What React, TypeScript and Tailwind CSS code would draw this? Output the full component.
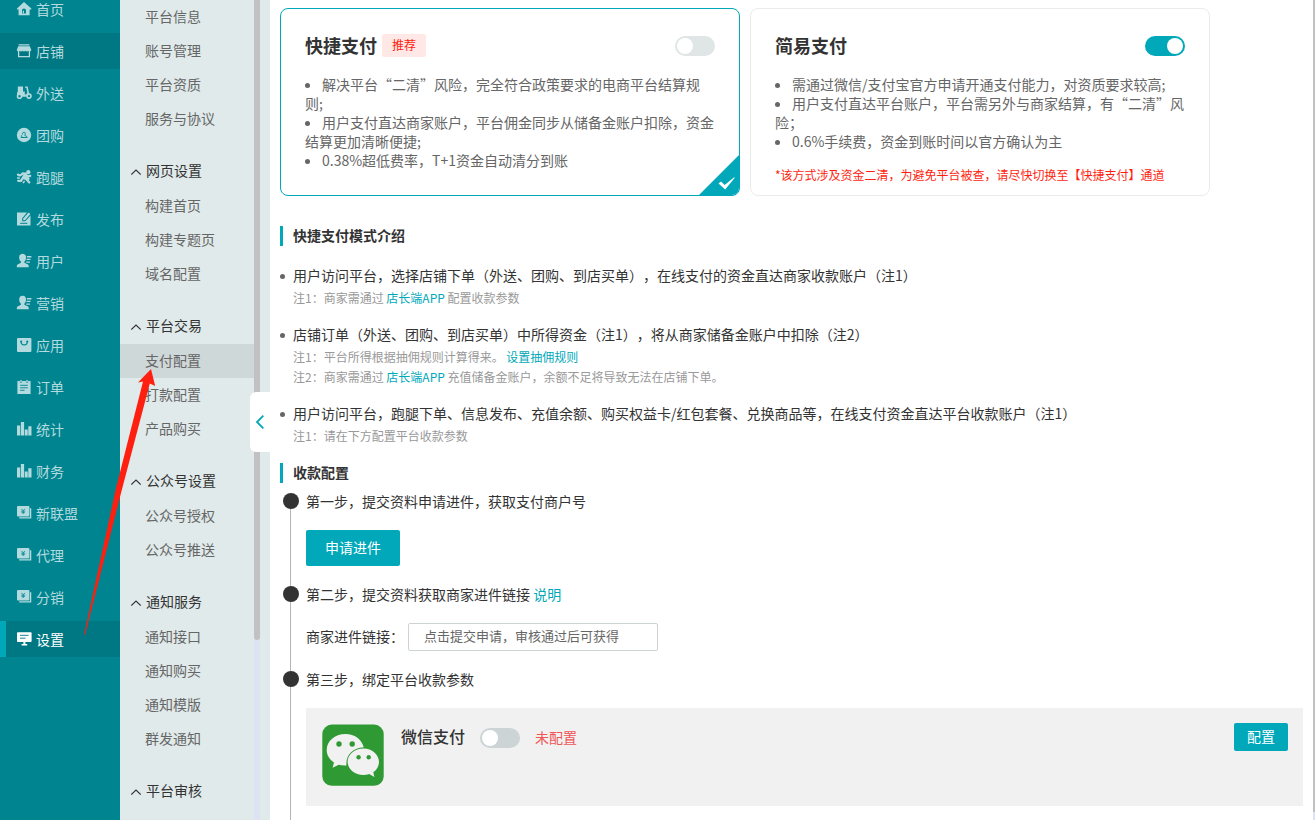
import React from "react";

const ICONS: Record<string, React.ReactNode> = {
  home: (
    <>
      <path d="M7 0 14.300 6.400V7.600H12.600V13.300H1.600V7.600H0V6.400Z" fill="currentColor" />
      <path d="M7 6.600c1.200 0 2 .9 2 2V11.400H5V8.600c0-1.100.8-2 2-2Z" className="fill-[#008590]" />
      <path d="M7 8.200v3.200H5.800V9.400Z" fill="currentColor" />
    </>
  ),
  shop: (
    <>
      <path d="M1.600 .3H12.400V1.500H1.600ZM1.200 2.200H12.800L14.300 6C14.300 7.400 12.300 7.800 11.600 6.700 11 7.800 9.200 7.800 8.500 6.700 7.800 7.800 6.200 7.800 5.500 6.700 4.800 7.800 3 7.800 2.400 6.700 1.800 7.800 -.2 7.400 -.2 6Z" fill="currentColor" />
      <path d="M1.600 7V12.600H12.400V7" fill="none" stroke="currentColor" strokeWidth="1.300" />
    </>
  ),
  scooter: (
    <>
      <path d="M.8 .4H6V5.600H7.800V8.500H9.400L10.300 6.500 9.400 1.800H8V.5H10.700L12 7.200 8.700 10.800H0V8C0 6.800.3 6.100.8 5.700Z" fill="currentColor" />
      <circle cx="2.500" cy="10.300" r="2" className="fill-[#008590]" stroke="currentColor" strokeWidth="1.600" />
      <circle cx="12" cy="10.100" r="2" className="fill-[#008590]" stroke="currentColor" strokeWidth="1.600" />
    </>
  ),
  group: (
    <>
      <circle cx="7" cy="7" r="7.200" fill="currentColor" />
      <path d="M5.500 6.500C4.800 4 8.500 3.400 8.300 5.600L7.800 7.500M3.800 9.500H10.400M4.800 7.200C3.500 8 4 9.200 5.800 9.200M8 7.500 9.800 8.600V9.500" fill="none" className="stroke-[#008590]" strokeWidth=".9" />
    </>
  ),
  runner: (
    <>
      <circle cx="11.300" cy="2.200" r="2.100" fill="currentColor" />
      <path d="M1 4.600C2.300 6 4.300 5.200 5.600 3.400L8.600 3.600 10 6.600 13.200 5.800M8 4.400 6 7.600 9.500 9.200 12.300 12.400M6 7.600 4 10.800H1.200M8.600 7.400 11.500 8.800" fill="none" stroke="currentColor" strokeWidth="2.300" strokeLinejoin="round" strokeLinecap="round" />
      <path d="M0 8H2.800M7.600 11 6 13.200" fill="none" stroke="currentColor" strokeWidth="1.400" />
    </>
  ),
  edit: (
    <>
      <path d="M0 .5H10L5.200 6.200V9.200H8.300L13.500 3.600V13.500H0Z" fill="currentColor" />
      <path d="M6.200 8.300V6.500L11.600.4 13.400 2 8 8.300Z" fill="currentColor" />
      <path d="M3.200 11.300H10.400" className="stroke-[#008590]" strokeWidth="1" />
    </>
  ),
  user: (
    <>
      <path d="M5.600 -.3C8.200 -.3 9.200 1.700 9 3.900 8.900 5.600 8.200 6.700 7.400 7.500V8.800L11 10.500C11.700 10.900 11.800 12 11.800 13.300H-.2C-.2 12 -.1 10.900.6 10.500L3.900 8.800V7.500C3 6.700 2.300 5.600 2.200 3.900 2 1.700 3 -.3 5.600 -.3Z" fill="currentColor" />
      <path d="M9.900 2H14.400V3.400H9.900ZM9.700 4.700H13.500V6.100H9.400ZM9.200 7.400H12.900V8.800H9.200Z" fill="currentColor" />
    </>
  ),
  app: (
    <>
      <rect x="0" y="0" width="14.400" height="14" rx="1" fill="currentColor" />
      <path d="M4.100 3.400C4.100 8 10.300 8 10.300 3.400" fill="none" className="stroke-[#008590]" strokeWidth="1.200" />
      <circle cx="4.100" cy="3.500" r="1" className="fill-[#008590]" />
      <circle cx="10.300" cy="3.500" r="1" className="fill-[#008590]" />
    </>
  ),
  order: (
    <>
      <path d="M.4 1H13.600V14H.4Z" fill="currentColor" />
      <path d="M4 0V2.800M10 0V2.800" className="stroke-[#008590]" strokeWidth="2.200" />
      <path d="M4 0V2.400M10 0V2.400" stroke="currentColor" strokeWidth="1.400" />
      <path d="M3.200 5.300H10.800M3.200 7.800H10.800M3.200 10.300H7.500" className="stroke-[#008590]" strokeWidth=".9" />
    </>
  ),
  bars: <path d="M0 3.500H3.200V13.400H0ZM3.900 0H7.100V13.400H3.900ZM7.800 7.400H10.700V13.400H7.800ZM11.300 4.200H14.500V13.400H11.300Z" fill="currentColor" />,
  money: (
    <>
      <rect x="0" y="0" width="12.400" height="10.600" rx="1" fill="currentColor" />
      <path d="M13.600 2.200V11.800H2.200" fill="none" stroke="currentColor" strokeWidth="1.300" />
      <path d="M4.500 2.900 6.200 4.800 7.900 2.900M4.200 5.200H8.200M4.600 6.600H7.800M6.200 4.800V8" fill="none" className="stroke-[#008590]" strokeWidth=".8" />
    </>
  ),
  screen: (
    <>
      <path d="M.8 .2H13.800Q14.600.200 14.600 1V9.300Q14.600 10.100 13.800 10.100H8.400V12H10.200V13.500H4.600V12H6.400V10.100H.8Q0 10.100 0 9.300V1Q0 .2.8.2Z" fill="currentColor" />
      <path d="M3 3.300H11.600M3 6.200H8.500" className="stroke-[#007883]" strokeWidth=".9" />
    </>
  ),
};

const NAV: { label: string; icon: string; state?: "hover" | "active" }[] = [
  { label: "首页", icon: "home" },
  { label: "店铺", icon: "shop", state: "hover" },
  { label: "外送", icon: "scooter" },
  { label: "团购", icon: "group" },
  { label: "跑腿", icon: "runner" },
  { label: "发布", icon: "edit" },
  { label: "用户", icon: "user" },
  { label: "营销", icon: "user" },
  { label: "应用", icon: "app" },
  { label: "订单", icon: "order" },
  { label: "统计", icon: "bars" },
  { label: "财务", icon: "bars" },
  { label: "新联盟", icon: "money" },
  { label: "代理", icon: "money" },
  { label: "分销", icon: "money" },
  { label: "设置", icon: "screen", state: "active" },
];

const MENU: { title?: string; items: string[] }[] = [
  { items: ["平台信息", "账号管理", "平台资质", "服务与协议"] },
  { title: "网页设置", items: ["构建首页", "构建专题页", "域名配置"] },
  { title: "平台交易", items: ["支付配置", "打款配置", "产品购买"] },
  { title: "公众号设置", items: ["公众号授权", "公众号推送"] },
  { title: "通知服务", items: ["通知接口", "通知购买", "通知模版", "群发通知"] },
  { title: "平台审核", items: [] },
];

function MainNav() {
  return (
    <nav className="w-[120px] shrink-0 overflow-hidden bg-[#008590]">
      <ul className="-mt-[9px] flex flex-col gap-[6px]">
        {NAV.map((n) => {
          const tone =
            n.state === "active"
              ? "border-[#00a8b9] bg-[#007883] text-white"
              : n.state === "hover"
                ? "border-transparent bg-[#007883] text-[#b3dade]"
                : "border-transparent text-[#b3dade]";
          return (
            <li key={n.label}>
              <a href="#" className={`flex h-9 items-center gap-[5px] border-l-[6px] pl-[11px] text-sm ${tone}`}>
                <svg viewBox="0 0 14 14" className="mb-px size-[14px] shrink-0 overflow-visible" aria-hidden="true">
                  {ICONS[n.icon]}
                </svg>
                {n.label}
              </a>
            </li>
          );
        })}
      </ul>
    </nav>
  );
}

function SubNav() {
  return (
    <aside className="relative flex w-[150px] shrink-0 bg-[#e0eaea] pr-[10px]">
      <nav className="min-w-0 flex-1 overflow-hidden text-sm">
        {MENU.map((g, i) => (
          <section key={i}>
            {g.title && (
              <h3 className="mt-[18px] flex h-[35px] items-center gap-[5px] pb-[3px] pl-[11px] text-[#333]">
                <svg viewBox="0 0 10 6" className="mt-1 h-[6px] w-[10px]" aria-hidden="true">
                  <path d="M.3 5.500 5 1l4.700 4.500" fill="none" stroke="currentColor" strokeWidth="1.100" />
                </svg>
                {g.title}
              </h3>
            )}
            <ul>
              {g.items.map((t) => (
                <li key={t}>
                  <a
                    href="#"
                    className={`flex h-[34px] items-center pb-[2px] pl-[25px] text-[#666] ${t === "支付配置" ? "bg-[#cfd8d9]" : ""}`}
                  >
                    {t}
                  </a>
                </li>
              ))}
            </ul>
          </section>
        ))}
      </nav>
      <div className="flex w-[6px] flex-col bg-[#dde3f3]">
        <div className="h-[78%] rounded-b-[3px] bg-[#c1c1c1]" />
      </div>
      <button
        type="button"
        aria-label="收起菜单"
        className="absolute top-[392px] right-0 flex h-[60px] w-5 items-center justify-center rounded-l-md bg-white text-[#00a8b9]"
      >
        <svg viewBox="0 0 8 14" className="h-[14px] w-2" aria-hidden="true">
          <path d="M7.300.7 1 7l6.300 6.300" fill="none" stroke="currentColor" strokeWidth="1.800" />
        </svg>
      </button>
    </aside>
  );
}

function Toggle({ label, on, off = "bg-[#ccd4d5]" }: { label: string; on?: boolean; off?: string }) {
  return (
    <input
      type="checkbox"
      role="switch"
      aria-label={label}
      defaultChecked={on}
      className={`h-5 w-10 shrink-0 appearance-none rounded-full p-[2px] before:block before:size-4 before:rounded-full before:bg-white checked:bg-[#00a8b9] checked:before:ml-5 ${off}`}
    />
  );
}

function Bullet({ children }: { children: React.ReactNode }) {
  return (
    <li>
      <span className="mr-3 inline-block size-[5px] rounded-full bg-[#666] align-[2px]" />
      {children}
    </li>
  );
}

function SectionTitle({ children }: { children: React.ReactNode }) {
  return (
    <h2 className="border-l-[3px] border-[#00a8b9] pb-[2px] pl-[10px] text-sm leading-[18px] font-semibold text-[#333]">
      {children}
    </h2>
  );
}

function Intro({ title, notes }: { title: string; notes: React.ReactNode[] }) {
  return (
    <li className="flex gap-2">
      <span className="mt-2 size-[5px] shrink-0 rounded-full bg-[#666]" />
      <div>
        <p className="mb-1 text-sm leading-[18px] text-[#333]">{title}</p>
        {notes.map((n, i) => (
          <p key={i} className="text-xs leading-5 text-[#999]">
            {n}
          </p>
        ))}
      </div>
    </li>
  );
}

function Step({ title, last, children }: { title: React.ReactNode; last?: boolean; children: React.ReactNode }) {
  return (
    <li className={`flex gap-[7px] ${last ? "flex-1" : ""}`}>
      <div className="flex w-4 shrink-0 flex-col">
        <span className="size-4 rounded-full bg-[#333]" />
        <span className="ml-[7px] w-px flex-1 bg-[#b5b5b5]" />
      </div>
      <div className="min-w-0 flex-1 pb-5">
        <h3 className="mb-[21px] text-sm leading-4 text-[#333]">{title}</h3>
        {children}
      </div>
    </li>
  );
}

function TealLink({ children }: { children: React.ReactNode }) {
  return (
    <a href="#" className="text-[#00a8b9]">
      {children}
    </a>
  );
}

export default function App() {
  return (
    <div
      lang="zh-CN"
      className="relative flex h-screen overflow-hidden bg-white font-['Noto_Sans_CJK_SC',sans-serif] [text-spacing-trim:space-all]"
    >
      <MainNav />
      <SubNav />

      <main className="flex min-w-0 flex-1 flex-col overflow-hidden px-[10px] pt-2">
        <div className="flex gap-[10px]">
          <section className="relative min-h-[188px] max-w-[460px] flex-1 overflow-hidden rounded-lg border border-[#00a8b9] px-6 pt-[25px] pb-[9px]">
            <div className="flex h-6 items-center">
              <h2 className="pb-[2px] text-lg leading-[22px] font-bold text-[#333]">快捷支付</h2>
              <span className="mb-px ml-[5px] rounded-xs bg-[#ffe8e6] px-[10px] pb-px text-xs leading-[22px] text-[#ff1e10]">
                推荐
              </span>
              <div className="ml-auto flex">
                <Toggle label="快捷支付" off="bg-[#e0e5e6]" />
              </div>
            </div>
            <ul className="mt-[17px] text-sm leading-[19px] text-[#666]">
              <Bullet>解决平台“二清”风险，完全符合政策要求的电商平台结算规则;</Bullet>
              <Bullet>用户支付直达商家账户，平台佣金同步从储备金账户扣除，资金结算更加清晰便捷;</Bullet>
              <Bullet>0.38%超低费率，T+1资金自动清分到账</Bullet>
            </ul>
            <svg viewBox="0 0 40 40" className="absolute right-0 bottom-0 size-10" aria-hidden="true">
              <path d="M40 0V40H0Z" fill="#00a8b9" />
              <path d="M19.500 28.500 22 26.600 25.600 30 35.200 22.200 35.800 22.800 26.200 34.500Z" fill="#fff" />
            </svg>
          </section>

          <section className="min-h-[188px] max-w-[460px] flex-1 rounded-lg border border-[#ebebeb] px-6 pt-[25px] pb-[9px]">
            <div className="flex h-6 items-center justify-between">
              <h2 className="pb-[2px] text-lg leading-[22px] font-bold text-[#333]">简易支付</h2>
              <Toggle label="简易支付" on />
            </div>
            <ul className="mt-[17px] text-sm leading-[19px] text-[#666]">
              <Bullet>需通过微信/支付宝官方申请开通支付能力，对资质要求较高;</Bullet>
              <Bullet>用户支付直达平台账户，平台需另外与商家结算，有“二清”风险；</Bullet>
              <Bullet>0.6%手续费，资金到账时间以官方确认为主</Bullet>
            </ul>
            <p className="mt-[15px] text-xs leading-[18px] text-[#ff1e10]">
              *该方式涉及资金二清，为避免平台被查，请尽快切换至【快捷支付】通道
            </p>
          </section>
        </div>

        <div className="mt-[30px]">
          <SectionTitle>快捷支付模式介绍</SectionTitle>
        </div>
        <ul className="mt-5 mb-[17px] flex flex-col gap-[17px]">
          <Intro
            title="用户访问平台，选择店铺下单（外送、团购、到店买单），在线支付的资金直达商家收款账户（注1）"
            notes={[<>注1：商家需通过 <TealLink>店长端APP</TealLink> 配置收款参数</>]}
          />
          <Intro
            title="店铺订单（外送、团购、到店买单）中所得资金（注1），将从商家储备金账户中扣除（注2）"
            notes={[
              <>注1：平台所得根据抽佣规则计算得来。 <TealLink>设置抽佣规则</TealLink></>,
              <>注2：商家需通过 <TealLink>店长端APP</TealLink> 充值储备金账户，余额不足将导致无法在店铺下单。</>,
            ]}
          />
          <Intro
            title="用户访问平台，跑腿下单、信息发布、充值余额、购买权益卡/红包套餐、兑换商品等，在线支付资金直达平台收款账户（注1）"
            notes={["注1：请在下方配置平台收款参数"]}
          />
        </ul>

        <SectionTitle>收款配置</SectionTitle>
        <ol className="mt-[10px] flex flex-1 flex-col pl-[3px]">
          <Step title="第一步，提交资料申请进件，获取支付商户号">
            <button type="button" className="block h-9 w-[94px] rounded-xs bg-[#00a8b9] pb-[2px] text-sm text-white">
              申请进件
            </button>
          </Step>
          <Step title={<>第二步，提交资料获取商家进件链接 <TealLink>说明</TealLink></>}>
            <div className="flex items-center gap-1 text-[#333]">
              <label htmlFor="merchant-link" className="pb-[2px] text-sm">
                商家进件链接：
              </label>
              <input
                id="merchant-link"
                type="text"
                readOnly
                defaultValue="点击提交申请，审核通过后可获得"
                className="h-7 w-[250px] rounded-xs border border-[#ccd4d5] bg-white px-[15px] pb-[3px] text-[13px] text-[#666]"
              />
            </div>
          </Step>
          <Step title="第三步，绑定平台收款参数" last>
            <div className="flex min-h-[98px] items-start bg-[#f1f1f1] px-[15px] pt-[15px] pb-5">
              <svg viewBox="0 0 62 62" className="mt-px ml-px size-[62px] shrink-0" aria-hidden="true">
                <rect x=".3" y=".6" width="61.400" height="61.200" rx="9.500" fill="#2f9a33" />
                <path d="M23.500 10C12.700 10 4.700 17.100 4.700 26.100 4.700 31.400 7.500 35.600 12 38.400L10.600 43.800 16.800 40.800C19 41.400 21.300 41.700 24.500 41.500 23.300 31.800 30.500 23.800 41.800 23.300 39.500 15.200 32.500 10 23.500 10Z" fill="#f1f1f1" />
                <circle cx="17" cy="20" r="2.700" fill="#2f9a33" />
                <circle cx="30.200" cy="20" r="2.700" fill="#2f9a33" />
                <path d="M41.500 24.400C32.600 24.400 25.600 30.400 25.600 37.700S32.600 51 41.500 51C43.500 51 45.400 50.700 47.200 50.100L52.400 52.900 51.300 48.200C55 45.700 57 42 57 37.700 57 30.400 50 24.400 41.500 24.400Z" fill="#f1f1f1" />
                <circle cx="36.600" cy="33.200" r="2.200" fill="#2f9a33" />
                <circle cx="46.700" cy="33.200" r="2.200" fill="#2f9a33" />
              </svg>
              <div className="ml-[17px] flex flex-1 items-center">
                <h4 className="pb-[2px] text-base leading-[26px] font-medium text-[#333]">微信支付</h4>
                <div className="mt-px ml-[15px] flex">
                  <Toggle label="微信支付" />
                </div>
                <span className="ml-[15px] text-sm text-[#f05656]">未配置</span>
                <button
                  type="button"
                  className="ml-auto h-7 w-[54px] rounded-xs bg-[#00a8b9] pb-[2px] text-sm text-white"
                >
                  配置
                </button>
              </div>
            </div>
          </Step>
        </ol>
      </main>

      <div className="flex w-[2px] shrink-0 flex-col bg-[#dde3f3]">
        <div className="h-[99%] bg-[#c1c1c1]" />
      </div>

      <svg
        viewBox="0 0 72 268"
        className="pointer-events-none absolute top-[368px] left-[84px] h-[268px] w-[72px]"
        aria-hidden="true"
      >
        <path d="M67 1 71.200 18 65.800 15.600 37 125 1 267 0 267 32 120 59 13.600 54 14.500Z" fill="#ff1f10" />
      </svg>
    </div>
  );
}
